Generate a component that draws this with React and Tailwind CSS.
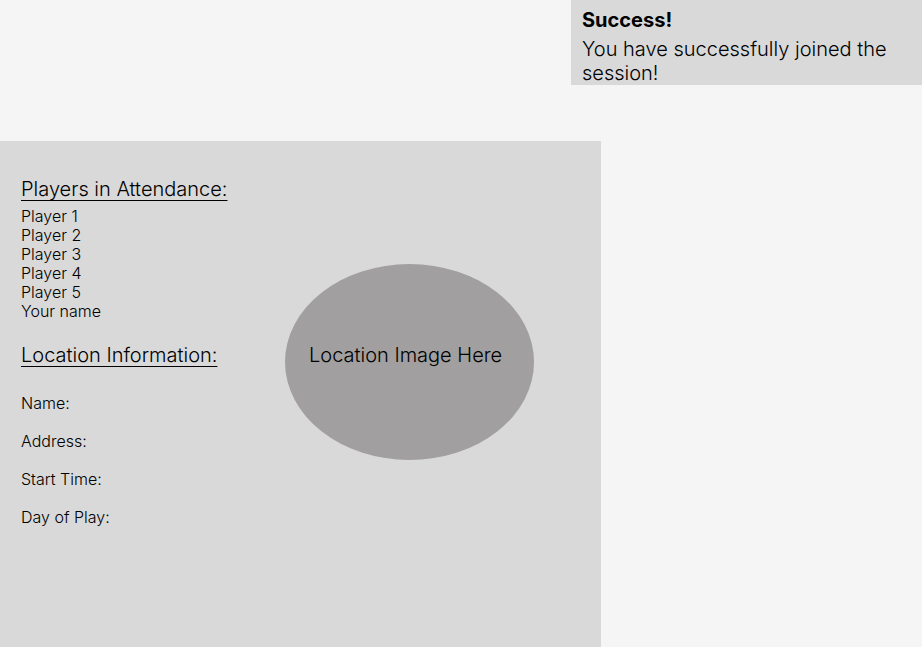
const players = ["Player 1", "Player 2", "Player 3", "Player 4", "Player 5", "Your name"];
const details = ["Name:", "Address:", "Start Time:", "Day of Play:"];

function Toast() {
  return (
    <div role="status" className="ml-auto w-[351px] max-w-full bg-[#d9d9d9] pt-2 pl-[11px]">
      <p className="text-[20px] leading-6 font-bold">Success!</p>
      <p className="mt-[5px] text-[20px] leading-6 font-light">
        You have successfully joined the session!
      </p>
    </div>
  );
}

function Heading({ children }) {
  return (
    <h2 className="text-[20px] leading-6 font-light underline decoration-1 underline-offset-4 [text-decoration-skip-ink:none]">
      {children}
    </h2>
  );
}

export default function App() {
  return (
    <div className="flex min-h-screen flex-col bg-[#f5f5f5] font-['Inter',sans-serif] text-black">
      <Toast />
      <main className="mt-14 mr-[321px] flex grow bg-[#d9d9d9] pt-9 pl-[21px]">
        <div className="w-[264px]">
          <Heading>Players in Attendance:</Heading>
          <ul className="mt-[6px] text-[16px] leading-[19px] font-light">
            {players.map((player) => (
              <li key={player}>{player}</li>
            ))}
          </ul>
          <div className="mt-[22px]">
            <Heading>Location Information:</Heading>
          </div>
          <ul className="mt-[27px] flex flex-col gap-[19px] text-[16px] leading-[19px] font-light">
            {details.map((detail) => (
              <li key={detail}>{detail}</li>
            ))}
          </ul>
        </div>
        <div className="mt-[87px] flex h-[196px] w-[249px] items-center rounded-[50%] bg-[#a19f9f] pb-[14px] pl-6 text-[20px] leading-6 font-light">
          Location Image Here
        </div>
      </main>
    </div>
  );
}
